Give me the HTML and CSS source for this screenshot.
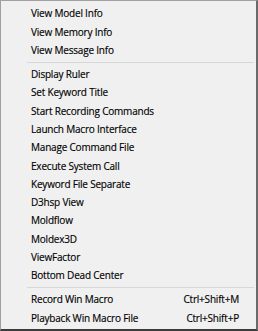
FILE: index.html
```html
<!DOCTYPE html>
<html>
<head>
<meta charset="utf-8">
<link rel="stylesheet" href="styles.css">
</head>
<body>
<div class="menu">
  <div class="item"><span class="label">View Model Info</span></div>
  <div class="item"><span class="label">View Memory Info</span></div>
  <div class="item"><span class="label">View Message Info</span></div>
  <div class="sep"></div>
  <div class="item"><span class="label">Display Ruler</span></div>
  <div class="item"><span class="label">Set Keyword Title</span></div>
  <div class="item"><span class="label">Start Recording Commands</span></div>
  <div class="item"><span class="label">Launch Macro Interface</span></div>
  <div class="item"><span class="label">Manage Command File</span></div>
  <div class="item"><span class="label">Execute System Call</span></div>
  <div class="item"><span class="label">Keyword File Separate</span></div>
  <div class="item"><span class="label">D3hsp View</span></div>
  <div class="item"><span class="label">Moldflow</span></div>
  <div class="item"><span class="label">Moldex3D</span></div>
  <div class="item"><span class="label">ViewFactor</span></div>
  <div class="item"><span class="label">Bottom Dead Center</span></div>
  <div class="sep"></div>
  <div class="item"><span class="label">Record Win Macro</span><span class="key">Ctrl+Shift+M</span></div>
  <div class="item"><span class="label">Playback Win Macro File</span><span class="key">Ctrl+Shift+P</span></div>
</div>
</body>
</html>
```

FILE: styles.css
```css
html, body {
  margin: 0;
  padding: 0;
  background: #f0f0f0;
}
.menu {
  box-sizing: border-box;
  width: 258px;
  height: 331px;
  background: #f0f0f0;
  border-top: 1px solid #a0a0a0;
  border-left: 1px solid #a0a0a0;
  border-right: 2px solid #6a6a6a;
  border-bottom: 2px solid #3c3c3c;
  padding-top: 3.2px;
  font-family: "Open Sans", "Noto Sans", sans-serif;
  font-size: 10px;
  letter-spacing: -0.2px;
  color: #000;
  -webkit-text-stroke: 0.15px #000;
}
.item {
  display: flex;
  justify-content: space-between;
  align-items: center;
  height: 18.3px;
  padding-left: 30px;
  padding-right: 17px;
  white-space: nowrap;
}
.sep {
  height: 1px;
  background: #d8d8d8;
  margin: 2.5px 2px 2.3px 26px;
}
```
